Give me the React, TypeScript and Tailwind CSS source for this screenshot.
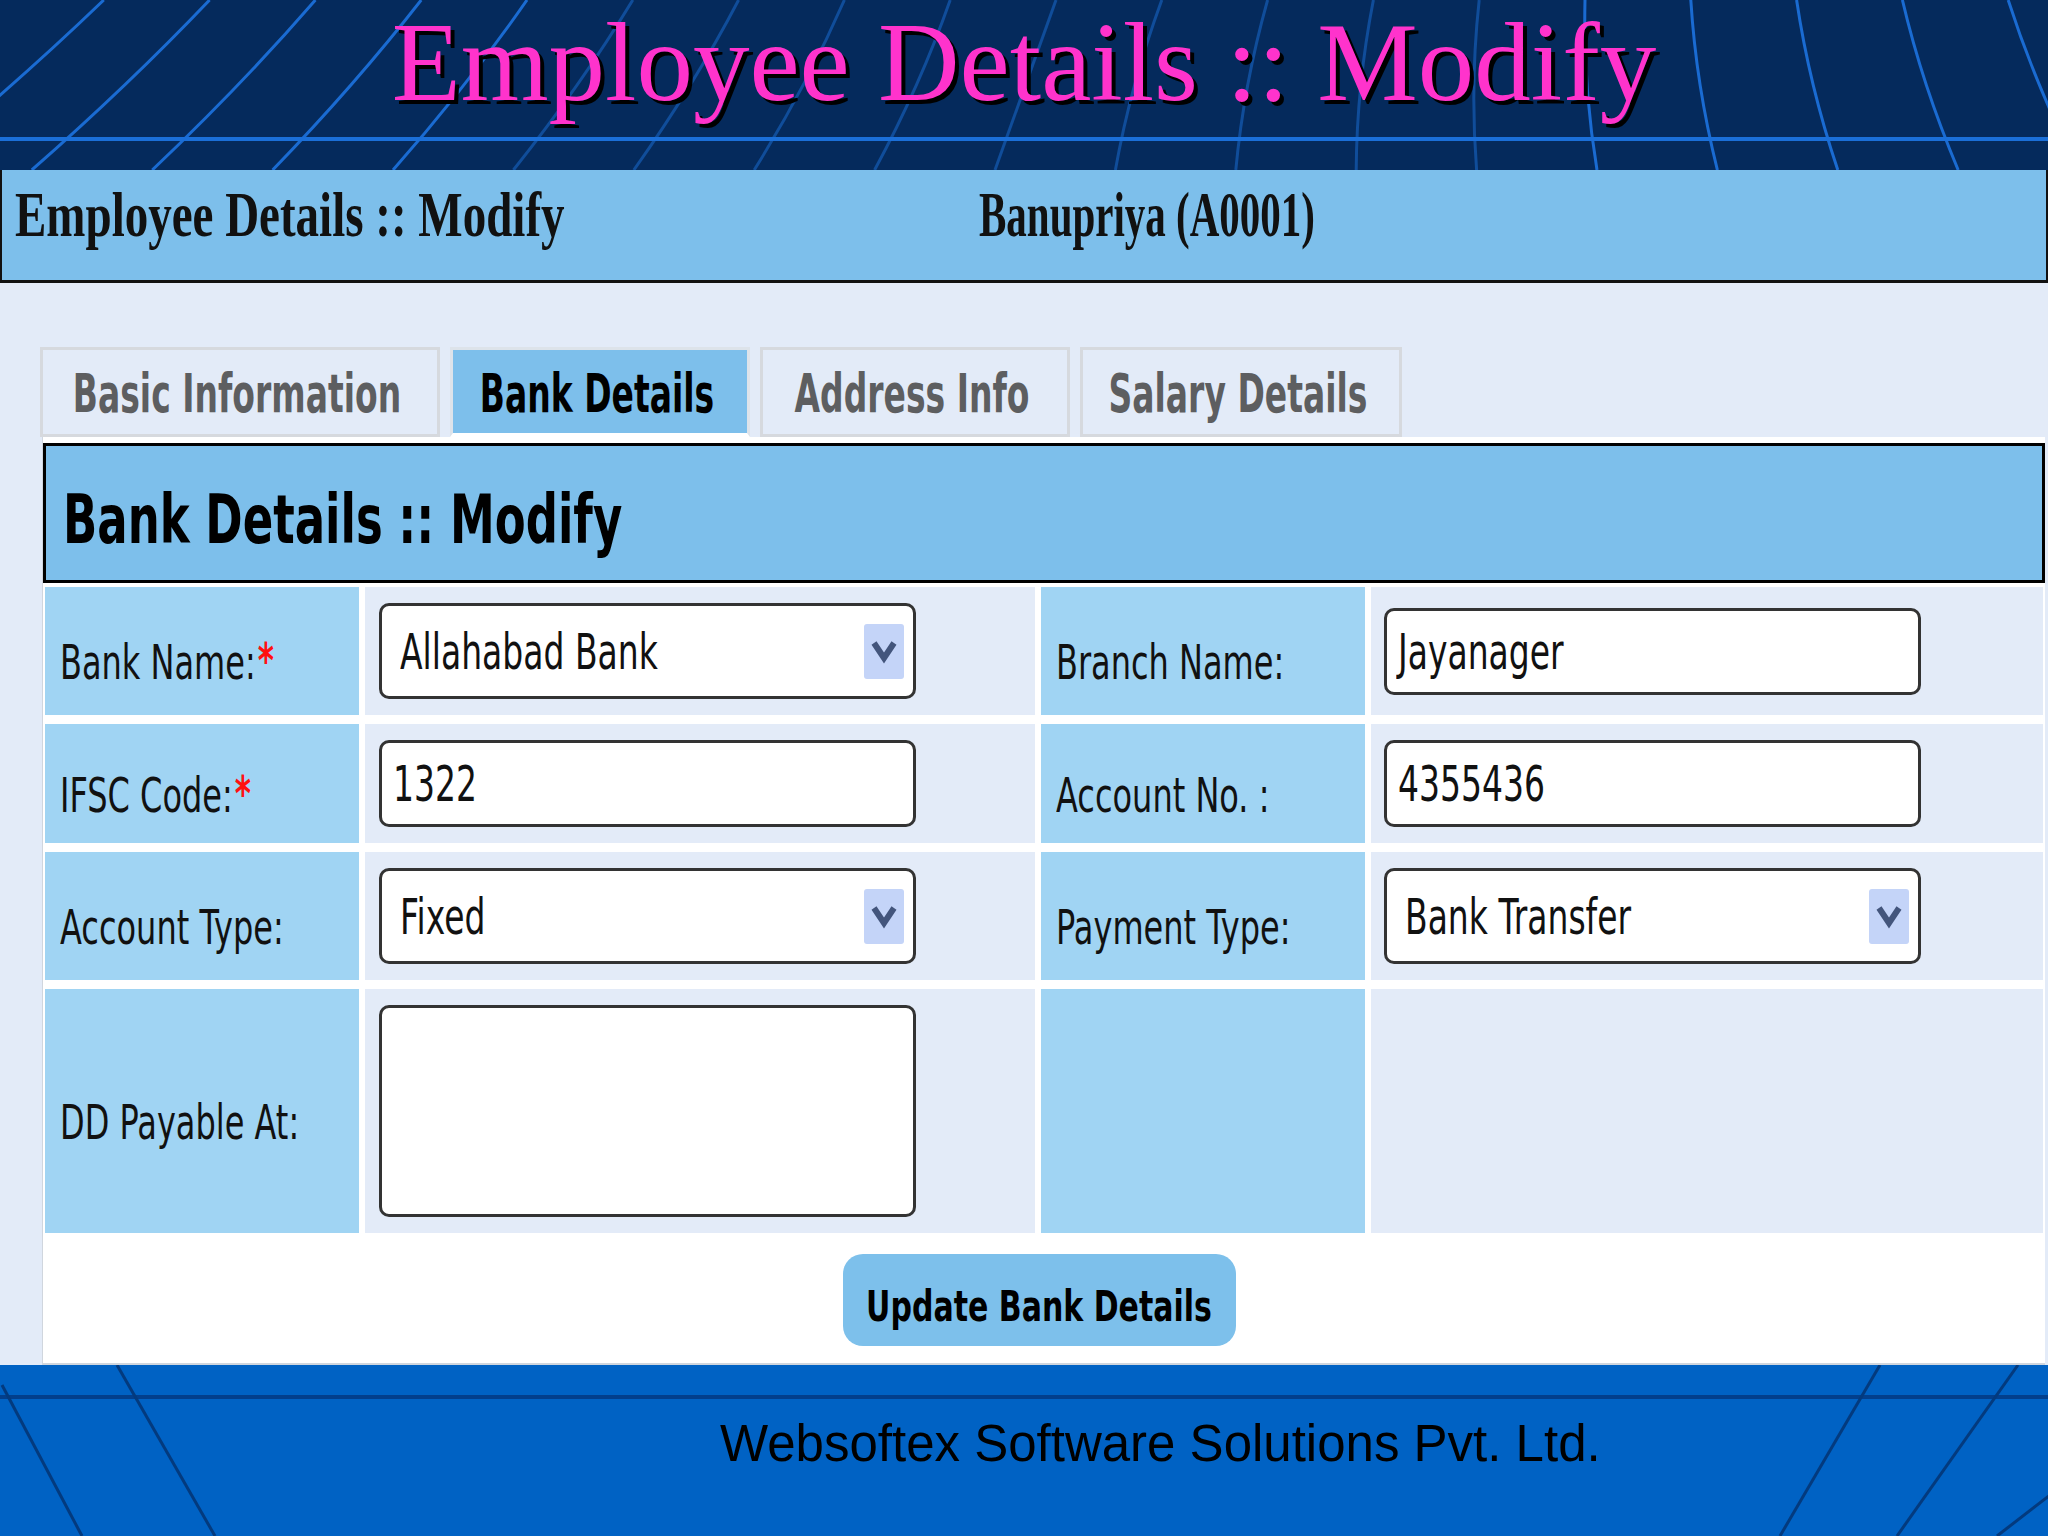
import React from 'react'

type Cell = { label: string; req?: boolean; kind: 'select' | 'text' | 'area' | 'none'; value?: string }

const rows: Array<[Cell, Cell]> = [
  [
    { label: 'Bank Name:', req: true, kind: 'select', value: 'Allahabad Bank' },
    { label: 'Branch Name:', kind: 'text', value: 'Jayanager' },
  ],
  [
    { label: 'IFSC Code:', req: true, kind: 'text', value: '1322' },
    { label: 'Account No. :', kind: 'text', value: '4355436' },
  ],
  [
    { label: 'Account Type:', kind: 'select', value: 'Fixed' },
    { label: 'Payment Type:', kind: 'select', value: 'Bank Transfer' },
  ],
  [
    { label: 'DD Payable At:', kind: 'area' },
    { label: '', kind: 'none' },
  ],
]

const tabs = [
  { title: 'Basic Information', w: 'w-[400px]' },
  { title: 'Bank Details', w: 'w-[300px]', active: true },
  { title: 'Address Info', w: 'w-[310px]' },
  { title: 'Salary Details', w: 'w-[322px]' },
]

// grid lines of the slide template
const HeaderLines = () => {
  const ks = [-10, -9, -8, -7, -6, -5, -4, -3, -2, -1, 0, 1, 2, 3, 4, 5, 6, 7, 8, 9, 10]
  return (
    <svg className="absolute inset-0" width="2048" height="170" viewBox="0 0 2048 170">
      {ks.map((k) => {
        const xb = 995 + k * 120.4
        const xt = 1056 + k * 105.8
        const xm = (xb + xt) / 2 - Math.sign(k) * 8
        return (
          <path
            key={k}
            d={`M${xt} 0 Q${xm} 85 ${xb} 170`}
            stroke="#1b6fd8"
            strokeWidth="3"
            fill="none"
            strokeOpacity={Math.abs(k) < 5 ? 0.5 : 0.95}
          />
        )
      })}
      <rect x="0" y="137" width="2048" height="4" fill="#1b6fd8" />
    </svg>
  )
}

const FooterLines = () => (
  <svg className="absolute inset-0" width="2048" height="171" viewBox="0 0 2048 171">
    <rect x="0" y="30" width="2048" height="4" fill="#023f8c" />
    <g stroke="#033a7e" strokeWidth="3" fill="none">
      <path d="M2 20 L82 171" />
      <path d="M117 0 L215 171" />
      <path d="M1880 0 L1780 171" />
      <path d="M2018 0 L1897 171" />
      <path d="M2050 130 L1997 171" />
    </g>
  </svg>
)

const Chevron = () => (
  <svg width="26" height="26" viewBox="0 0 26 26">
    <path d="M3 5 L13 20 L23 5" stroke="#43557c" strokeWidth="6" fill="none" />
  </svg>
)

const Field = ({ cell }: { cell: Cell }) => {
  const text = "inline-block font-['DejaVu_Sans',sans-serif] text-[33px] leading-none text-[#111] scale-y-[1.52] whitespace-nowrap"
  if (cell.kind === 'none') return null
  if (cell.kind === 'area')
    return <div className="w-[537px] h-[212px] bg-white border-[3px] border-[#333] rounded-[10px]" />
  if (cell.kind === 'select')
    return (
      <div className="w-[537px] h-[96px] bg-white border-[3px] border-[#333] rounded-[10px] flex items-center justify-between pl-[18px] pr-[9px]">
        <span className={text}>{cell.value}</span>
        <div className="w-[40px] h-[55px] rounded-[3px] bg-[#c4d4f8] flex items-center justify-center">
          <Chevron />
        </div>
      </div>
    )
  return (
    <div className="w-[537px] h-[87px] bg-white border-[3px] border-[#333] rounded-[10px] flex items-center pl-[11px]">
      <span className={text}>{cell.value}</span>
    </div>
  )
}

const Label = ({ cell }: { cell: Cell }) => (
  <div className="bg-[#a0d4f3] flex items-center pl-[15px] pt-[22px]">
    {cell.label && (
      <span className="inline-block font-['DejaVu_Sans',sans-serif] text-[32px] leading-none text-[#111] scale-y-[1.52] whitespace-nowrap">
        {cell.label}
        {cell.req && <span className="text-[#ff1010] text-[31px] font-bold align-top ml-[2px]">*</span>}
      </span>
    )}
  </div>
)

export default function App() {
  return (
    <div className="w-[2048px] h-[1536px] overflow-hidden flex flex-col bg-[#e3ebf8]">
      {/* slide title */}
      <div className="relative h-[170px] shrink-0 bg-[#052a5c]">
        <HeaderLines />
        <div className="relative flex justify-center pt-[5px]">
          <h1 className="font-['Liberation_Serif',serif] text-[113px] leading-none text-[#ff33cc] [text-shadow:4px_4px_0_#000] whitespace-nowrap">
            Employee Details :: Modify
          </h1>
        </div>
      </div>

      {/* page bar */}
      <div className="h-[113px] shrink-0 bg-[#7dbfeb] border-x-2 border-b-[3px] border-[#111] flex items-start pt-[22px] pl-[13px] font-['Liberation_Serif',serif] font-bold text-[#111]">
        <div className="w-[964px]">
          <span className="inline-block text-[47px] leading-none scale-y-[1.35] whitespace-nowrap">Employee Details :: Modify</span>
        </div>
        <span className="inline-block mt-[3px] text-[41px] leading-none scale-y-[1.55] whitespace-nowrap">Banupriya (A0001)</span>
      </div>

      {/* content */}
      <div className="flex-1 flex flex-col">
        <div className="flex gap-[10px] pl-[40px] pt-[64px] h-[154px] shrink-0">
          {tabs.map((t) => (
            <div
              key={t.title}
              className={`${t.w} h-[90px] flex items-center justify-center pt-[3px] pr-[6px] ${
                t.active
                  ? 'bg-[#7dbfeb] border-x-[3px] border-t-[3px] border-[#dde3ea] border-b-[4px] border-b-white text-[#000]'
                  : 'bg-[#e3ebf8] border-[3px] border-[#d6d9de] text-[#5d5e60]'
              }`}
            >
              <span className="inline-block font-['DejaVu_Sans',sans-serif] font-bold text-[33px] leading-none scale-y-[1.62] whitespace-nowrap">
                {t.title}
              </span>
            </div>
          ))}
        </div>

        <div className="flex-1 ml-[42px] mr-[3px] bg-white border-b-2 border-l border-[#d0d6de] flex flex-col pt-[6px]">
          <div className="h-[140px] shrink-0 bg-[#7dbfeb] border-[3px] border-black flex items-center pl-[17px] pt-[12px]">
            <span className="inline-block font-['DejaVu_Sans',sans-serif] font-bold text-[45px] leading-none text-black scale-y-[1.5] whitespace-nowrap">
              Bank Details :: Modify
            </span>
          </div>

          <div className="mt-[4px] pl-[2px] grid grid-cols-[314px_670px_324px_672px] grid-rows-[128px_119px_128px_244px] gap-x-[6px] gap-y-[9px]">
            {rows.map(([a, b]) => (
              <React.Fragment key={a.label}>
                <Label cell={a} />
                <div className="bg-[#e3ebf8] flex items-center pl-[14px]">
                  <Field cell={a} />
                </div>
                <Label cell={b} />
                <div className="bg-[#e3ebf8] flex items-center pl-[13px]">
                  <Field cell={b} />
                </div>
              </React.Fragment>
            ))}
          </div>

          <div className="mt-[21px] flex justify-center pr-[10px]">
            <button className="w-[393px] h-[92px] rounded-[20px] bg-[#7dc0eb] flex items-center justify-center pt-[12px]">
              <span className="inline-block font-['DejaVu_Sans',sans-serif] font-bold text-[30px] leading-none text-black scale-y-[1.45] whitespace-nowrap">
                Update Bank Details
              </span>
            </button>
          </div>
        </div>
      </div>

      {/* footer */}
      <div className="relative h-[171px] shrink-0 bg-[#0062c4]">
        <FooterLines />
        <div className="relative pl-[720px] pt-[53px]">
          <span className="font-['Liberation_Sans',Arial,sans-serif] text-[51px] leading-none text-black whitespace-nowrap">
            Websoftex Software Solutions Pvt. Ltd.
          </span>
        </div>
      </div>
    </div>
  )
}
